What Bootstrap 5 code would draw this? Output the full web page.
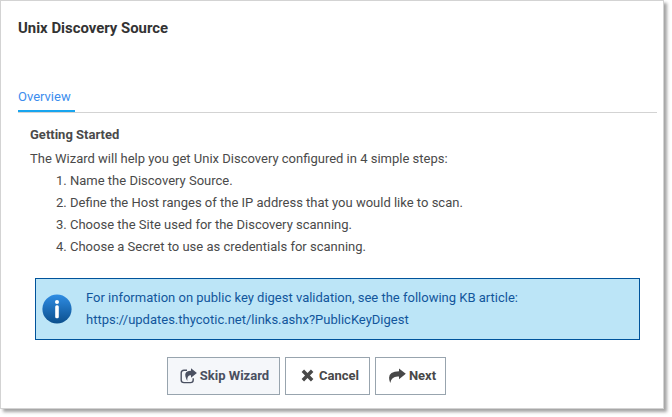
<!DOCTYPE html>
<html lang="en">
<head>
<meta charset="utf-8">
<title>Unix Discovery Source</title>
<link href="https://cdn.jsdelivr.net/npm/bootstrap@5.3.0/dist/css/bootstrap.min.css" rel="stylesheet">
<style>
body{font:400 13px/22px Roboto,"Liberation Sans",sans-serif;color:#4a4a4a;background:#fff;min-height:417px}
.wizard{width:664px;height:409px;border:1px solid #d3d3d3;box-shadow:3px 3px 3px rgba(0,0,0,.36);padding:0 6px 0 17px}
.wizard-title{font-size:14.9px;line-height:22px;font-weight:700;color:#333;padding-top:16px;height:84px}
.wizard-tabs{height:28px;border-bottom:1px solid #d3d3d3}
.wizard-tabs .nav-link{width:57px;height:27px;padding:1px 0 0;color:#3c8dee;border-bottom:2px solid #18a5ef}
.wizard-body{padding:11px 16px 0 12px}
.wizard-body h2{font-size:13px;line-height:22px;font-weight:700}
.intro{padding-top:2px}
.steps{padding-left:40px}
.kb-note{width:605px;height:62px;margin:20px 0 0 5px;padding:0 0 1px 6px;gap:14px;border:1px solid #00539b;border-radius:0;background:#bce5f7;color:#12569c}
.wizard-actions{margin:17px 0 0 137px;gap:5px}
.wizard-actions .btn{height:38px;padding:0 0 1px;border:1px solid #98a4ae;border-radius:0;font-size:13px;line-height:22px;font-weight:700;color:#484848}
.wizard-actions .btn-skip{width:113px;padding-left:2px;background:#f5f7fa;color:#4a5061;gap:3px}
.wizard-actions .btn-cancel{width:85px;padding-left:5px;gap:5px}
.wizard-actions .btn-next{width:71px;padding-left:3px;gap:3px}
</style>
<script src="https://cdn.jsdelivr.net/npm/bootstrap@5.3.0/dist/js/bootstrap.bundle.min.js"></script>
</head>
<body>
<main class="wizard bg-white">
  <h1 class="wizard-title mb-0">Unix Discovery Source</h1>
  <nav class="wizard-tabs nav"><a class="nav-link" href="#">Overview</a></nav>
  <section class="wizard-body">
    <h2 class="mb-0">Getting Started</h2>
    <p class="mb-0 intro">The Wizard will help you get Unix Discovery configured in 4 simple steps:</p>
    <ol class="steps mb-0">
      <li>Name the Discovery Source.</li>
      <li>Define the Host ranges of the IP address that you would like to scan.</li>
      <li>Choose the Site used for the Discovery scanning.</li>
      <li>Choose a Secret to use as credentials for scanning.</li>
    </ol>
    <div class="alert kb-note d-flex align-items-center">
      <svg width="30" height="30" viewBox="0 0 30 30" class="flex-shrink-0">
        <defs><linearGradient id="g" x2="0" y2="1"><stop stop-color="#2f8de4"/><stop offset="1" stop-color="#0b4f8d"/></linearGradient></defs>
        <circle cx="15" cy="15" r="14.6" fill="url(#g)"/>
        <circle cx="15" cy="8" r="2" fill="#fff"/><rect x="13.2" y="11.3" width="3.6" height="13" rx="1.5" fill="#fff"/>
      </svg>
      <div>For information on public key digest validation, see the following KB article:<br>https://updates.thycotic.net/links.ashx?PublicKeyDigest</div>
    </div>
    <div class="wizard-actions d-flex">
      <button class="btn btn-skip d-flex align-items-center justify-content-center">
        <svg width="17" height="16" viewBox="0 0 17 16"><path d="M7 2.200H4Q1.200 2.200 1.200 5v7Q1.200 14.600 4 14.600h6.500q2.700 0 2.700-2.600v-1.800" fill="none" stroke="currentColor" stroke-width="1.4"/><path d="M11 .2 16.900 5 11 9.800V7.200Q6.800 7 7.300 13 1.800 2.900 11 2.700z" fill="currentColor"/></svg>
        <span>Skip Wizard</span>
      </button>
      <button class="btn btn-cancel d-flex align-items-center justify-content-center">
        <svg width="13" height="13" viewBox="0 0 12 12"><path d="m1.700 1.700 8.600 8.600M10.300 1.700l-8.600 8.600" stroke="currentColor" stroke-width="3.200"/></svg>
        <span>Cancel</span>
      </button>
      <button class="btn btn-next d-flex align-items-center justify-content-center">
        <svg width="18" height="16" viewBox="0 0 18 16"><path d="M11 .4 17.800 5.800 11 11.200V8.500Q3.500 7.700 2.200 15-2.300 3.300 11 3.200z" fill="currentColor"/></svg>
        <span>Next</span>
      </button>
    </div>
  </section>
</main>
</body>
</html>
